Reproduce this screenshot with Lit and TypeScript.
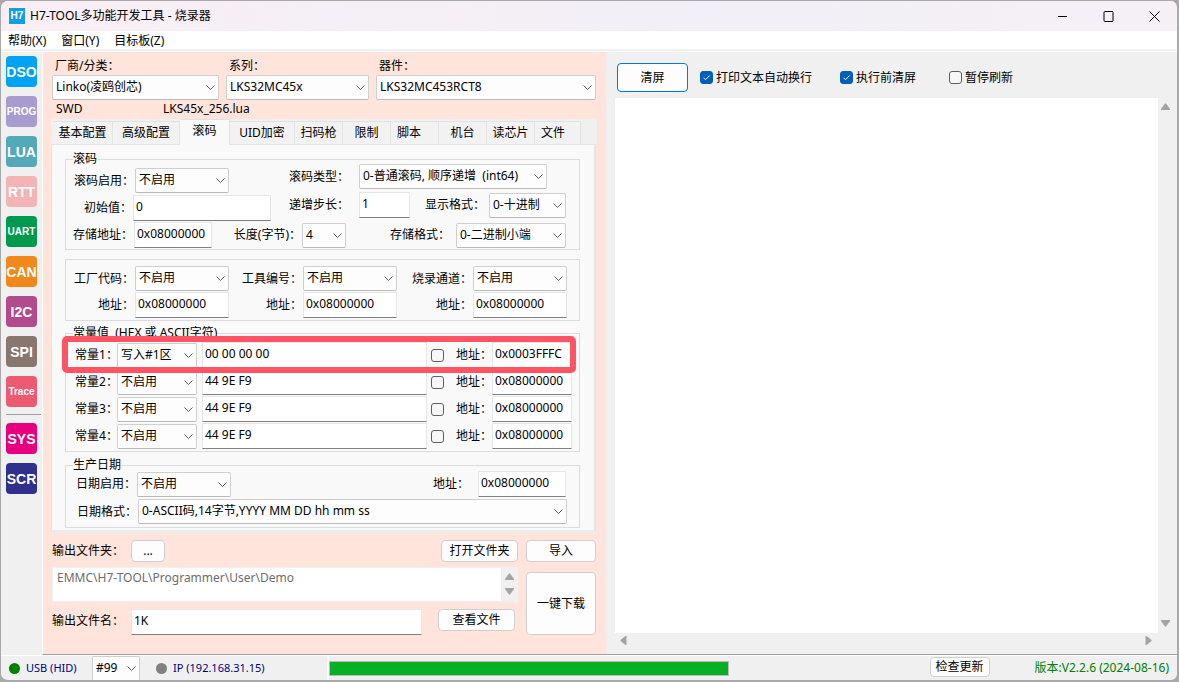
import { LitElement, html, css, svg, nothing } from "lit";
import { customElement, property } from "lit/decorators.js";
import { classMap } from "lit/directives/class-map.js";
import { styleMap } from "lit/directives/style-map.js";

const controls = css`
  * { box-sizing: border-box; }
  button, input, textarea, select {
    font: inherit;
    color: inherit;
    margin: 0;
    border-radius: 0;
  }
  .field {
    width: 100%;
    height: 26px;
    min-width: 0;
    padding: 0 2px 4px;
    border: 1px solid #e6e6e6;
    border-bottom-color: #808080;
    background: #fff;
    outline: none;
  }
  .button {
    height: 22px;
    padding: 0;
    border: 1px solid #cfcfcf;
    border-radius: 4px;
    background: #fdfdfd;
    white-space: nowrap;
  }
  .tick {
    appearance: none;
    flex: none;
    width: 13px;
    height: 13px;
    border: 1px solid #5f5f5f;
    border-radius: 3px;
    background: #f7f7f7;
  }
  .tick:checked {
    border-color: #005fb8;
    background: #005fb8 url("data:image/svg+xml,%3Csvg xmlns='http://www.w3.org/2000/svg' viewBox='0 0 11 11'%3E%3Cpath d='M2.5 5.7l2 2L8.7 3.5' fill='none' stroke='white'/%3E%3C/svg%3E");
  }
`;

@customElement("combo-box")
class ComboBox extends LitElement {
  @property() value = "";
  @property() label = "";

  static styles = [controls, css`
    :host { display: grid; min-width: 0; }
    .select {
      grid-area: 1 / 1;
      appearance: none;
      width: 100%;
      height: 25px;
      padding: 0 20px 1px 3px;
      border: 1px solid #cfcfcf;
      border-bottom-color: #bababa;
      border-radius: 2px;
      background: #fdfdfd;
      white-space: pre;
    }
    .chevron {
      grid-area: 1 / 1;
      place-self: center end;
      width: 9px;
      height: 5px;
      margin-right: 4px;
      fill: none;
      stroke: #5c5c5c;
      pointer-events: none;
    }
  `];

  render() {
    return html`
      <select class="select" aria-label=${this.label}><option>${this.value}</option></select>
      <svg class="chevron" viewBox="0 0 9 5"><path d="M.5 .5l4 4 4-4" /></svg>
    `;
  }
}

const tools = [
  ["DSO", "#00a2f2"], ["PROG", "#a79bd0"], ["LUA", "#54a9b8"], ["RTT", "#f4b3b5"],
  ["UART", "#009a4e"], ["CAN", "#f2871c"], ["I2C", "#b14b8b"], ["SPI", "#88776f"],
  ["Trace", "#ec5b72"], ["SYS", "#e6007f"], ["SCR", "#2f2f8c"],
];

const tabs = [
  ["基本配置", 60], ["高级配置", 67], ["滚码", 50], ["UID加密", 65], ["扫码枪", 48],
  ["限制", 48], ["脚本", 48], ["机台", 48], ["读芯片", 48], ["文件", 46],
] as const;

const constants = [
  { mode: "写入#1区", data: "00 00 00 00", address: "0x0003FFFC", marked: true },
  { mode: "不启用", data: "44 9E F9", address: "0x08000000", marked: false },
  { mode: "不启用", data: "44 9E F9", address: "0x08000000", marked: false },
  { mode: "不启用", data: "44 9E F9", address: "0x08000000", marked: false },
];

const arrows = {
  up: "M4 0.5h1l4 5.5v1H0v-1z",
  down: "M0 1h9v1L5 7.5H4L0 2z",
  left: "M6.5 0v9h-1L0.5 5V4l5-4z",
  right: "M1.5 0v9h1l5-4V4l-5-4z",
};

@customElement("app-root")
class AppRoot extends LitElement {
  static styles = [controls, css`
    :host {
      display: block;
      font: 12px/14px "Noto Sans", "Noto Sans CJK SC", sans-serif;
      color: #000;
      background: #a9a9a9;
    }
    .window {
      display: flex;
      flex-direction: column;
      min-height: 100vh;
      border: 1px solid #a9a9a9;
      border-width: 1px 2px 2px 1px;
      border-radius: 8px;
      background: #f0f0f0;
      overflow: hidden;
    }

    .titlebar {
      display: flex;
      align-items: center;
      height: 30px;
      padding-left: 8px;
      background: linear-gradient(90deg, #faeef4, #f2eff8 60%, #f6eff6);
    }
    .logo {
      width: 16px;
      margin-right: 5px;
      background: #0f9fe8;
      color: #fff;
      font: bold 10px/16px "Liberation Sans", sans-serif;
      text-align: center;
    }
    .title { flex: 1; }
    .caption {
      width: 46px;
      height: 30px;
      padding: 0;
      border: 0;
      background: none;
    }
    .caption svg {
      display: block;
      width: 11px;
      height: 11px;
      margin: 0 auto;
      fill: none;
      stroke: #000;
    }

    .menubar {
      display: flex;
      gap: 15px;
      height: 18px;
      padding-left: 7px;
      background: #fff;
    }
    .menu { color: inherit; text-decoration: none; line-height: 20px; }

    .main {
      flex: 1;
      display: flex;
      margin-top: 2px;
      border-top: 1px solid #fff;
    }
    .sidebar {
      display: flex;
      flex-direction: column;
      gap: 9px;
      width: 41px;
      padding: 4px 0 0 5px;
    }
    .tool {
      display: flex;
      align-items: center;
      justify-content: center;
      width: 31px;
      height: 31px;
      padding: 0;
      border: 0;
      border-radius: 4px;
      color: #fff;
      font: bold 14px/28px "Liberation Sans", sans-serif;
      white-space: nowrap;
    }
    .tool.long { font-size: 10px; }
    .divider {
      width: 35px;
      height: 1px;
      margin: -2px 0 -1px;
      border: 0;
      background: #a0a0a0;
    }

    .setup {
      width: 564px;
      padding: 7px 10px 19px 9px;
      border: 1px solid #a0a0a0;
      border-width: 0 0 1px 1px;
      border-left-color: #fff;
      background: #ffe4db;
    }
    .device {
      display: grid;
      grid-template-columns: 167px 143px 220px;
      column-gap: 7px;
      row-gap: 2px;
    }
    .device .text { padding-left: 3px; }
    .script {
      display: grid;
      grid-template-columns: 107px 1fr;
      padding: 2px 4px 3px;
    }

    .tabs {
      display: flex;
      align-items: flex-end;
      height: 25px;
      margin-right: -1px;
      margin-left: -1px;
      padding-left: 2px;
      background: #f0f0f0;
    }
    .tab {
      height: 23px;
      padding: 0;
      border: 1px solid #e2e2e2;
      border-width: 1px 1px 0 0;
      background: #f2f2f2;
      white-space: nowrap;
    }
    .tab.start { padding-left: 6px; text-align: left; }
    .tab.current {
      height: 26px;
      padding-bottom: 4px;
      margin-bottom: -1px;
      background: #f9f9f9;
    }
    .page {
      display: flex;
      flex-direction: column;
      margin-left: -1px;
      padding: 14px 14px 2px 13px;
      border: 1px solid #e5e5e5;
      border-right-width: 2px;
      border-bottom: 3px solid #ebebeb;
      background: #f9f9f9;
    }
    .group {
      position: relative;
      min-width: 0;
      margin: 0 0 10px;
      padding: 6px 12px 2px 0;
      border: 1px solid #dcdcdc;
    }
    .legend {
      position: absolute;
      top: -8px;
      left: 7px;
      padding: 0;
      background: #f9f9f9;
      white-space: pre;
    }
    .row { display: grid; align-items: center; }
    .row .text { white-space: nowrap; }
    .end { justify-self: end; margin-right: 1px; }

    .rolling { margin-bottom: 9px; padding-top: 4px; padding-bottom: 1px; }
    .halves {
      display: grid;
      grid-template-columns: 223px 1fr;
      align-items: start;
      margin-bottom: 1px;
    }
    .left-rows { display: grid; row-gap: 2px; padding-top: 4px; }
    .right-rows { display: grid; row-gap: 3px; }
    .enable { grid-template-columns: 69px 94px; }
    .initial { grid-template-columns: 67px 138px; }
    .kind { grid-template-columns: 70px 188px; }
    .step { grid-template-columns: 70px 51px 15px 64px 77px; }
    .storage { grid-template-columns: 68px 78px 90px 44px 44px 66px 110px; }
    .codes { grid-template-columns: 69px 94px 74px 94px 76px 94px; row-gap: 1px; }

    .consts { margin-top: 2px; margin-bottom: 13px; padding: 8px 8px 2px 9px; display: grid; row-gap: 1px; }
    .const { position: relative; grid-template-columns: 42px 80px 5px 225px 4px 25px 36px 80px; }
    .mark {
      position: absolute;
      z-index: 1;
      inset: -6px -4px -5px -13px;
      border: 6px solid #ff5464;
      border-radius: 5px;
      pointer-events: none;
    }

    .date { margin-bottom: 0; padding: 5px 12px 3px 0; display: grid; row-gap: 2px; }
    .date-on { grid-template-columns: 71px 94px 202px 45px 88px; }
    .date-format { grid-template-columns: 72px 1fr; }

    .output {
      display: grid;
      grid-template-columns: 466px 70px;
      column-gap: 8px;
      padding-top: 7px;
    }
    .output-main { display: grid; row-gap: 5px; }
    .output-side { display: grid; grid-template-rows: 22px 63px; row-gap: 10px; }
    .folder { grid-template-columns: 79px 34px 1fr 77px; }
    .file { grid-template-columns: 79px 291px 16px 77px; align-items: start; padding-top: 2px; }
    .file .text { padding-top: 5px; }
    .path {
      display: grid;
      grid-template-columns: 1fr 16px;
      height: 35px;
      border: 1px solid #f0f0f0;
      background: #fff;
    }
    .path-text, .log-text {
      resize: none;
      border: 0;
      padding: 3px 4px;
      outline: none;
      background: #fff;
      color: #6d6d6d;
      overflow: hidden;
    }
    .big { height: 63px; }
    .bar {
      display: flex;
      flex-direction: column;
      align-items: center;
      justify-content: space-between;
      padding: 5px 0;
      background: #f0f0f0;
    }
    .bar.flat { flex-direction: row; padding: 0 5px; }
    .arrow { width: 9px; height: 9px; fill: #a3a3a3; }

    .console {
      flex: 1;
      display: flex;
      flex-direction: column;
      min-width: 0;
      padding: 11px 4px 6px 9px;
      border-bottom: 1px solid #a0a0a0;
    }
    .options { display: flex; align-items: center; padding-left: 2px; margin-bottom: 6px; }
    .clear { width: 71px; height: 29px; border-color: #0078d4; margin-right: 12px; }
    .option { display: flex; align-items: center; gap: 3px; margin-right: 28px; }
    .option + .option { margin-right: 33px; }
    .log {
      flex: 1;
      display: grid;
      grid-template: 1fr 15px / 1fr 15px;
    }

    .status {
      display: flex;
      align-items: center;
      height: 25px;
      border-top: 1px solid #fff;
      color: #00007f;
    }
    .lamp { width: 11px; height: 11px; border-radius: 50%; background: #808080; margin-right: 6px; }
    .lamp.on { background: #008000; margin-left: 8px; }
    .usb, .ip { font-size: 11px; }
    .usb { width: 66px; }
    .slot { width: 48px; margin-right: 16px; color: #000; }
    .ip { width: 154px; }
    .progress {
      flex: 1;
      align-self: stretch;
      display: flex;
      align-items: center;
      border-left: 2px solid #fff;
    }
    .meter {
      appearance: none;
      width: 400px;
      height: 15px;
      border: 1px solid #bcbcbc;
      background: #e6e6e6;
    }
    .meter::-webkit-progress-bar { background: #e6e6e6; }
    .meter::-webkit-progress-value { background: #06b025; }
    .update { width: 60px; height: 20px; color: #000; margin: 0 45px 3px 0; }
    .version { color: #008000; margin-right: 8px; }
  `];

  private field(label: string, value: string) {
    return html`<input class="field" aria-label=${label} .value=${value} />`;
  }

  private combo(label: string, value: string) {
    return html`<combo-box label=${label} value=${value}></combo-box>`;
  }

  private arrow(kind: keyof typeof arrows) {
    return html`<svg class="arrow" viewBox="0 0 9 9">${svg`<path d=${arrows[kind]} />`}</svg>`;
  }

  private caption(label: string, d: string) {
    return html`<button class="caption" aria-label=${label}>
      <svg viewBox="0 0 11 11">${svg`<path d=${d} />`}</svg>
    </button>`;
  }

  private rolling() {
    return html`
      <fieldset class="group rolling">
        <legend class="legend">滚码</legend>
        <div class="halves">
          <div class="left-rows">
            <div class="row enable"><span class="text end">滚码启用：</span>${this.combo("滚码启用", "不启用")}</div>
            <div class="row initial"><span class="text end">初始值：</span>${this.field("初始值", "0")}</div>
          </div>
          <div class="right-rows">
            <div class="row kind"><span class="text">滚码类型：</span>${this.combo("滚码类型", "0-普通滚码, 顺序递增\u00a0\u00a0(int64)")}</div>
            <div class="row step">
              <span class="text">递增步长：</span>${this.field("递增步长", "1")}
              <span></span><span class="text">显示格式：</span>${this.combo("显示格式", "0-十进制")}
            </div>
          </div>
        </div>
        <div class="row storage">
          <span class="text end">存储地址：</span>${this.field("存储地址", "0x08000000")}
          <span class="text end">长度(字节)：</span>${this.combo("长度(字节)", "4")}
          <span></span><span class="text">存储格式：</span>${this.combo("存储格式", "0-二进制小端")}
        </div>
      </fieldset>
    `;
  }

  private codes() {
    const names = ["工厂代码", "工具编号", "烧录通道"];
    return html`
      <fieldset class="group">
        <div class="row codes">
          ${names.map((n) => html`<span class="text end">${n}：</span>${this.combo(n, "不启用")}`)}
          ${names.map((n) => html`<span class="text end">地址：</span>${this.field(n + "地址", "0x08000000")}`)}
        </div>
      </fieldset>
    `;
  }

  private constants() {
    return html`
      <fieldset class="group consts">
        <legend class="legend">常量值  (HEX 或 ASCII字符)</legend>
        ${constants.map((c, i) => html`
          <div class="row const">
            <span class="text">常量${i + 1}：</span>
            ${this.combo(`常量${i + 1}`, c.mode)}
            <span></span>
            ${this.field(`常量${i + 1}数据`, c.data)}
            <span></span>
            <input class="tick" type="checkbox" aria-label=${`常量${i + 1} ASCII`} />
            <span class="text">地址：</span>
            ${this.field(`常量${i + 1}地址`, c.address)}
            ${c.marked ? html`<div class="mark"></div>` : nothing}
          </div>
        `)}
      </fieldset>
    `;
  }

  private date() {
    return html`
      <fieldset class="group date">
        <legend class="legend">生产日期</legend>
        <div class="row date-on">
          <span class="text end">日期启用：</span>${this.combo("日期启用", "不启用")}
          <span></span><span class="text">地址：</span>${this.field("日期地址", "0x08000000")}
        </div>
        <div class="row date-format">
          <span class="text end">日期格式：</span>${this.combo("日期格式", "0-ASCII码,14字节,YYYY MM DD hh mm ss")}
        </div>
      </fieldset>
    `;
  }

  private setup() {
    return html`
      <section class="setup">
        <div class="device">
          <span class="text">厂商/分类：</span><span class="text">系列：</span><span class="text">器件：</span>
          ${this.combo("厂商/分类", "Linko(凌鸥创芯)")}
          ${this.combo("系列", "LKS32MC45x")}
          ${this.combo("器件", "LKS32MC453RCT8")}
        </div>
        <div class="script"><span>SWD</span><span>LKS45x_256.lua</span></div>
        <div class="tabs" role="tablist">
          ${tabs.map(([name, width]) => html`
            <button role="tab" aria-selected=${name === "滚码"}
              class=${classMap({ tab: true, current: name === "滚码", start: name === "脚本" || name === "文件" })}
              style=${styleMap({ width: `${width}px` })}>${name}</button>
          `)}
        </div>
        <div class="page">${this.rolling()}${this.codes()}${this.constants()}${this.date()}</div>
        <div class="output">
          <div class="output-main">
            <div class="row folder">
              <span class="text">输出文件夹：</span><button class="button">...</button>
              <span></span><button class="button">打开文件夹</button>
            </div>
            <div class="path">
              <textarea class="path-text" aria-label="输出文件夹" readonly .value=${"EMMC\\H7-TOOL\\Programmer\\User\\Demo"}></textarea>
              <div class="bar">${this.arrow("up")}${this.arrow("down")}</div>
            </div>
            <div class="row file">
              <label class="text" for="file-name">输出文件名：</label>
              <input class="field" id="file-name" .value=${"1K"} />
              <span></span><button class="button">查看文件</button>
            </div>
          </div>
          <div class="output-side">
            <button class="button">导入</button>
            <button class="button big">一键下载</button>
          </div>
        </div>
      </section>
    `;
  }

  private console() {
    return html`
      <section class="console">
        <div class="options">
          <button class="button clear">清屏</button>
          <label class="option"><input class="tick" type="checkbox" checked />打印文本自动换行</label>
          <label class="option"><input class="tick" type="checkbox" checked />执行前清屏</label>
          <label class="option"><input class="tick" type="checkbox" />暂停刷新</label>
        </div>
        <div class="log">
          <textarea class="log-text" aria-label="打印文本"></textarea>
          <div class="bar">${this.arrow("up")}${this.arrow("down")}</div>
          <div class="bar flat">${this.arrow("left")}${this.arrow("right")}</div>
        </div>
      </section>
    `;
  }

  render() {
    return html`
      <div class="window">
        <header class="titlebar">
          <span class="logo">H7</span>
          <span class="title">H7-TOOL多功能开发工具 - 烧录器</span>
          ${this.caption("最小化", "M1 5.5h9")}
          ${this.caption("最大化", "M2 .5h7a1 1 0 0 1 1 1v8a1 1 0 0 1-1 1h-7a1 1 0 0 1-1-1v-8a1 1 0 0 1 1-1z")}
          ${this.caption("关闭", "M.5 .5l10 10M10.5 .5l-10 10")}
        </header>
        <nav class="menubar">
          <a class="menu" href="#help">帮助(X)</a>
          <a class="menu" href="#window">窗口(Y)</a>
          <a class="menu" href="#target">目标板(Z)</a>
        </nav>
        <main class="main">
          <nav class="sidebar">
            ${tools.map(([name, color]) => html`
              ${name === "SYS" ? html`<hr class="divider" />` : nothing}
              <button class=${classMap({ tool: true, long: name.length > 3 })}
                style=${styleMap({ background: color })}>${name}</button>
            `)}
          </nav>
          ${this.setup()}${this.console()}
        </main>
        <footer class="status">
          <span class="lamp on"></span><span class="usb">USB (HID)</span>
          <combo-box class="slot" label="设备编号" value="#99"></combo-box>
          <span class="lamp"></span><span class="ip">IP (192.168.31.15)</span>
          <div class="progress"><progress class="meter" max="100" value="100" aria-label="进度"></progress></div>
          <button class="button update">检查更新</button>
          <span class="version">版本:V2.2.6 (2024-08-16)</span>
        </footer>
      </div>
    `;
  }
}
